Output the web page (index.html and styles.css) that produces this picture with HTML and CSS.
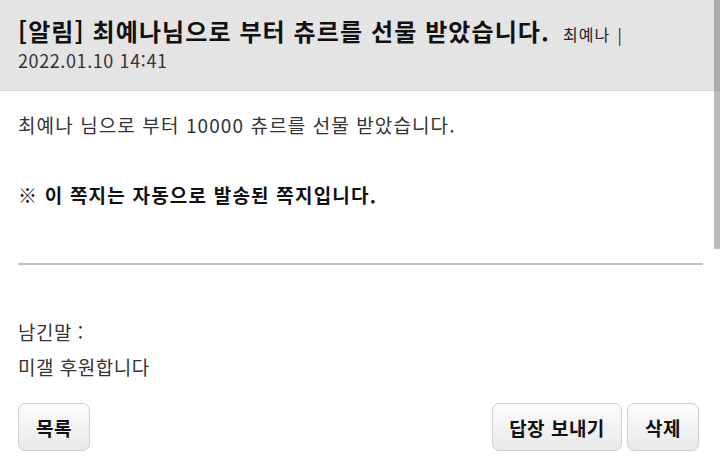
FILE: index.html
```html
<!DOCTYPE html>
<html lang="ko">
<head>
<meta charset="utf-8">
<link rel="stylesheet" href="styles.css">
</head>
<body>
<div class="page">
  <header class="head">
    <div class="title-row">
      <h1 class="title">[알림] 최예나님으로 부터 츄르를 선물 받았습니다.</h1>
      <span class="sender">최예나 |</span>
    </div>
    <div class="date">2022.01.10 14:41</div>
  </header>
  <main class="content">
    <p class="msg">최예나 님으로 부터 10000 츄르를 선물 받았습니다.</p>
    <p class="notice">※ 이 쪽지는 자동으로 발송된 쪽지입니다.</p>
    <hr class="rule">
    <p class="memo-label">남긴말 :</p>
    <p class="memo">미갤 후원합니다</p>
    <div class="actions">
      <button class="btn">목록</button>
      <div class="right">
        <button class="btn btn-wide">답장 보내기</button>
        <button class="btn">삭제</button>
      </div>
    </div>
  </main>
  <div class="scrollbar"></div>
</div>
</body>
</html>
```
FILE: styles.css
```css
* { box-sizing: border-box; }
html, body { margin: 0; padding: 0; background: #fff; }
body {
  font-family: "Noto Sans CJK KR", "Noto Sans", sans-serif;
  color: #222;
  width: 720px;
  height: 456px;
  overflow: hidden;
}
.page { position: relative; width: 720px; height: 456px; }
.head {
  background: #e4e4e4;
  height: 91px;
  border-bottom: 1px solid #d6d6cf;
  padding: 13px 18px 0 18px;
}
.title-row { display: flex; align-items: baseline; }
.title {
  margin: 0;
  font-size: 24px;
  font-weight: 700;
  letter-spacing: 1.1px;
  color: #111;
  line-height: 36px;
}
.sender {
  margin-left: 13px;
  font-size: 16px;
  letter-spacing: 1px;
  word-spacing: 2px;
  color: #222;
}
.date {
  font-size: 18px;
  letter-spacing: 0.6px;
  color: #333;
  line-height: 22px;
  margin-top: 0;
}
.content { padding: 0 17px 0 18px; }
.msg {
  margin: 20px 0 0 0;
  font-size: 19px;
  letter-spacing: 1.1px;
  line-height: 28px;
  color: #333;
}
.notice {
  margin: 42px 0 0 0;
  font-size: 19px;
  font-weight: 700;
  letter-spacing: 1.2px;
  line-height: 28px;
  color: #111;
}
.rule {
  margin: 54px 0 0 0;
  border: 0;
  height: 2px;
  background: #c2c2c2;
}
.memo-label {
  margin: 53px 0 0 0;
  font-size: 19px;
  letter-spacing: 0.5px;
  line-height: 28px;
  color: #333;
}
.memo {
  margin: 7px 0 0 0;
  font-size: 19px;
  letter-spacing: 0.5px;
  line-height: 28px;
  color: #333;
}
.actions {
  display: flex;
  justify-content: space-between;
  margin-top: 22px;
  padding-right: 4px;
}
.right { display: flex; gap: 5px; }
.btn {
  font-family: inherit;
  width: 72px;
  height: 48px;
  border: 1px solid #cfcfcf;
  border-radius: 7px;
  background: linear-gradient(#fdfdfd 0%, #f2f2f2 50%, #e9e9e9 100%);
  font-size: 19px;
  font-weight: 700;
  letter-spacing: 0.5px;
  color: #111;
  padding: 0;
}
.btn-wide { width: 130px; }
.scrollbar {
  position: absolute;
  right: 0;
  top: 0;
  width: 6px;
  height: 249px;
  background: linear-gradient(#ababab 0, #ababab 91px, #bcbcbc 91px);
}
```
